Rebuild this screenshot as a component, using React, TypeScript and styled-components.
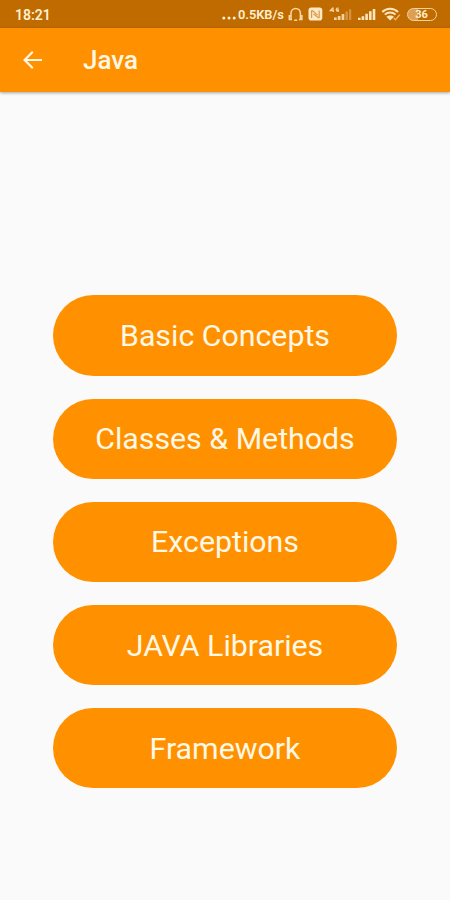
import React from "react";
import styled, { createGlobalStyle } from "styled-components";

const GlobalStyle = createGlobalStyle`
  * { box-sizing: border-box; }
  body { margin: 0; background: #fafafa; font-family: Roboto, "Liberation Sans", sans-serif; }
`;

const Screen = styled.div`
  width: 450px;
  height: 900px;
  display: flex;
  flex-direction: column;
  background: #fafafa;
  overflow: hidden;
`;

const StatusBar = styled.header`
  height: 28px;
  flex: none;
  display: flex;
  align-items: center;
  justify-content: space-between;
  padding: 0 13px 0 15px;
  background: #bf6b00;
  color: #fff0d2;
`;

const Clock = styled.time`
  font-size: 14px;
  font-weight: 600;
  line-height: 16px;
  padding-top: 1px;
`;

const StatusItems = styled.div`
  display: flex;
  align-items: center;
`;

const Dots = styled.svg`
  width: 16px;
  height: 14px;
  margin-top: 2px;
`;

const Speed = styled.span`
  font-size: 12.8px;
  font-weight: 600;
  line-height: 16px;
  width: 47px;
  padding-top: 1px;
  white-space: nowrap;
`;

const Glyph = styled.svg<{ $w: number; $gap: number }>`
  width: ${(p) => p.$w}px;
  height: 16px;
  margin-left: ${(p) => p.$gap}px;
  flex: none;
`;

const Battery = styled.div`
  width: 30px;
  height: 13px;
  margin: 1px 0 0 6px;
  padding-right: 1px;
  display: flex;
  align-items: center;
  justify-content: center;
  border: 1.5px solid #f6d3a0;
  border-radius: 7px;
  background: linear-gradient(90deg, #dca050 36%, transparent 36%);
  font-size: 11px;
  font-weight: 700;
  line-height: 10px;
`;

const AppBar = styled.div`
  height: 64px;
  flex: none;
  display: flex;
  align-items: center;
  padding-left: 22px;
  background: #ff9100;
  color: #fff8e6;
  box-shadow: 0 1px 3px rgba(0, 0, 0, 0.35);
`;

const BackButton = styled.button`
  width: 22px;
  height: 22px;
  padding: 0;
  border: 0;
  background: none;
  color: inherit;
  display: flex;
`;

const Title = styled.h1`
  margin: 0 0 0 39px;
  font-size: 26px;
  font-weight: 500;
  line-height: 30px;
`;

const TopicList = styled.main`
  flex: 1;
  display: flex;
  flex-direction: column;
  align-items: center;
  gap: 22.9px;
  padding-top: 203.4px;
`;

const TopicButton = styled.button`
  width: 344px;
  height: 80.3px;
  flex: none;
  padding: 1px 0 0;
  border: 0;
  border-radius: 41px;
  background: #ff9100;
  color: #fff8e6;
  font-family: inherit;
  font-size: 30.3px;
  line-height: 36px;
`;

const topics = ["Basic Concepts", "Classes & Methods", "Exceptions", "JAVA Libraries", "Framework"];

export default function App() {
  return (
    <>
      <GlobalStyle />
      <Screen>
        <StatusBar>
          <Clock>18:21</Clock>
          <StatusItems>
            <Dots viewBox="0 0 16 14" fill="currentColor">
              <circle cx="1.8" cy="10" r="1.5" />
              <circle cx="7" cy="10" r="1.5" />
              <circle cx="12.2" cy="10" r="1.5" />
            </Dots>
            <Speed>0.5KB/s</Speed>
            <Glyph $w={15} $gap={3} viewBox="0 0 15 16" fill="none" stroke="#f9d9a8" strokeWidth="1.5">
              <path d="M3 13V7.2a4.7 4.7 0 0 1 9.4 0V13" />
              <path d="M3 9.8H1.3v3.6H4M12.4 9.8h1.5v3.6H11M6.2 14.2h3" />
            </Glyph>
            <Glyph $w={15} $gap={5} viewBox="0 0 15 16">
              <rect x="0.5" y="1.5" width="13.8" height="13" rx="2.8" fill="#ffe8c4" />
              <path d="M3.6 12V5.2q0-1 1-.4l5 4.3M11.2 4.4v6.8q0 1-1 .4L5.5 8" fill="none" stroke="#d9994d" strokeWidth="1.2" />
            </Glyph>
            <Glyph $w={24} $gap={6} viewBox="0 0 24 16" fill="#f6d3a0">
              <path d="M4 1.6 1.2 4.7h3.1V6M4 1.6v3.1M9.5 2.4C7 1 6.2 5.5 9.4 5.2V4H8" fill="none" stroke="#f6d3a0" strokeWidth="1.3" />
              <path d="M5 11.5h2.7V14H5zM8.8 10h2.7v4H8.8zM12.6 8h2.7v6h-2.7z" />
              <path d="M16.4 5.5h2.5V14h-2.5zM20 3.2h2.2V14H20z" opacity=".4" />
            </Glyph>
            <Glyph $w={18} $gap={5} viewBox="0 0 18 16" fill="#ffe5bc">
              <path d="M0 11.8h2.6V14H0zM3.6 10.2h2.6V14H3.6zM7.3 7.7h2.6V14H7.3zM11 5.2h2.6V14H11zM14.7 3h2.6v11h-2.6z" />
            </Glyph>
            <Glyph $w={20} $gap={5} viewBox="0 0 20 16" fill="none" stroke="#ffe5bc" strokeWidth="2">
              <path d="M1.3 6C5.5 1.7 12.8 1.7 17 6M3.8 8.6c3-2.9 7.7-2.9 10.7 0" />
              <path d="M5.4 10.8c2.1-1.8 5.5-1.8 7.6 0L9.2 14.6z" fill="#ffe5bc" stroke="none" />
              <path d="m12.7 12 1.7 1.7 4.4-5" strokeWidth="1.3" stroke="#eeb66d" />
            </Glyph>
            <Battery>36</Battery>
          </StatusItems>
        </StatusBar>
        <AppBar>
          <BackButton aria-label="Back">
            <svg width="22" height="22" viewBox="0 0 22 22" fill="none" stroke="currentColor" strokeWidth="2.2">
              <path d="M20 11H3M10.8 2.7 2.6 11l8.2 8.2" />
            </svg>
          </BackButton>
          <Title>Java</Title>
        </AppBar>
        <TopicList>
          {topics.map((topic) => (
            <TopicButton key={topic}>{topic}</TopicButton>
          ))}
        </TopicList>
      </Screen>
    </>
  );
}
